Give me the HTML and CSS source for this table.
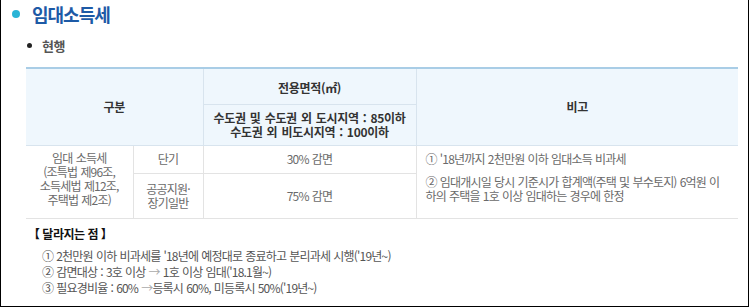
FILE: index.html
```html
<!DOCTYPE html>
<html lang="ko">
<head>
<meta charset="utf-8">
<title>임대소득세</title>
<link rel="stylesheet" href="styles.css">
</head>
<body>
<div class="frame">
  <h2 class="title"><span class="title-dot"></span>임대소득세</h2>
  <div class="body">
    <h3 class="sub"><span class="sub-dot"></span>현행</h3>
    <table class="tax">
      <colgroup>
        <col class="c1"><col class="c2"><col class="c3"><col class="c4">
      </colgroup>
      <thead>
        <tr class="r1">
          <th colspan="2" rowspan="2" class="first">구분</th>
          <th class="area">전용면적(㎡)</th>
          <th rowspan="2" class="last">비고</th>
        </tr>
        <tr class="r2">
          <th>수도권 및 수도권 외 도시지역 : 85이하<br>수도권 외 비도시지역 : 100이하</th>
        </tr>
      </thead>
      <tbody>
        <tr class="r3">
          <td rowspan="2" class="first law">임대 소득세<br>(조특법 제96조,<br>소득세법 제12조,<br>주택법 제2조)</td>
          <td>단기</td>
          <td>30% 감면</td>
          <td rowspan="2" class="last note">
            <p class="note-p">① '18년까지 2천만원 이하 임대소득 비과세</p>
            <p class="note-p second">② 임대개시일 당시 기준시가 합계액(주택 및 부수토지) 6억원 이<br>하의 주택을 1호 이상 임대하는 경우에 한정</p>
          </td>
        </tr>
        <tr class="r4">
          <td>공공지원·<br>장기일반</td>
          <td>75% 감면</td>
        </tr>
      </tbody>
    </table>
    <div class="changes">
      <p class="changes-head">【 달라지는 점 】</p>
      <ul class="changes-list">
        <li>① 2천만원 이하 비과세를 '18년에 예정대로 종료하고 분리과세 시행('19년~)</li>
        <li>② 감면대상 : 3호 이상 <span class="arrow">→</span> 1호 이상 임대('18.1월~)</li>
        <li>③ 필요경비율 : 60% <span class="arrow">→</span>등록시 60%, 미등록시 50%('19년~)</li>
      </ul>
    </div>
  </div>
</div>
</body>
</html>
```
FILE: styles.css
```css
* { box-sizing: border-box; }
html, body { margin: 0; padding: 0; background: #fff; }
body {
  font-family: "Noto Sans CJK KR", "Noto Sans", sans-serif;
  color: #444;
}
.frame {
  width: 749px;
  height: 307px;
  border: 1px solid #000;
  border-top: 0;
  padding: 0 10px 0 11px;
  overflow: hidden;
}
.title {
  margin: 0;
  height: 28px;
  display: flex;
  align-items: center;
  font-size: 18px;
  font-weight: 700;
  color: #1d5aa6;
  letter-spacing: -1px;
}
.title-dot {
  flex: none;
  width: 8px;
  height: 8px;
  border-radius: 50%;
  background: #2ab4d6;
  margin-right: 12px;
}
.body { padding-left: 14px; }
.sub {
  margin: 7px 0 0 1px;
  height: 20px;
  display: flex;
  align-items: center;
  font-size: 13px;
  font-weight: 700;
  color: #555;
  letter-spacing: -0.5px;
}
.sub-dot {
  flex: none;
  width: 5px;
  height: 5px;
  border-radius: 50%;
  background: #222;
  margin-right: 10px;
}
.tax {
  width: 712px;
  margin-top: 12px;
  border-collapse: collapse;
  table-layout: fixed;
  font-size: 12px;
  letter-spacing: -0.8px;
  word-spacing: 0.5px;
  color: #6a6a6a;
  border-top: 2px solid #a9cde6;
  border-bottom: 1px solid #dcdcdc;
}
.c1 { width: 107px; }
.c2 { width: 70px; }
.c3 { width: 213px; }
.c4 { width: 322px; }
.tax th, .tax td {
  padding: 0;
  text-align: center;
  vertical-align: middle;
  line-height: 14px;
  border: 1px solid #e3e3e3;
}
.tax th {
  background: #eff7fd;
  color: #333;
  font-weight: 700;
  letter-spacing: -0.3px;
  word-spacing: 1px;
  border-color: #d8e4ee;
}
.tax .area { padding-top: 4px; }
.tax .first { border-left: 0; }
.tax .last { border-right: 0; }
.tax .law { padding-bottom: 6px; }
.r1 { height: 36px; }
.r2 { height: 41px; }
.r3 { height: 28px; }
.r4 { height: 45px; }
.tax .note {
  text-align: left;
  vertical-align: top;
  padding: 6px 9px 0 9px;
}
.note-p { margin: 0; }
.note-p.second { margin-top: 9px; }
.changes { padding-left: 2px; }
.changes-head {
  margin: 7px 0 0 0;
  line-height: 16px;
  font-size: 12px;
  font-weight: 700;
  color: #111;
  letter-spacing: -0.5px;
}
.changes-list {
  list-style: none;
  margin: 6px 0 0 0;
  padding: 0 0 0 14px;
  font-size: 12px;
  line-height: 16px;
  letter-spacing: -0.8px;
  word-spacing: 0.5px;
  color: #555;
}
.arrow { color: #aaa; }
```
